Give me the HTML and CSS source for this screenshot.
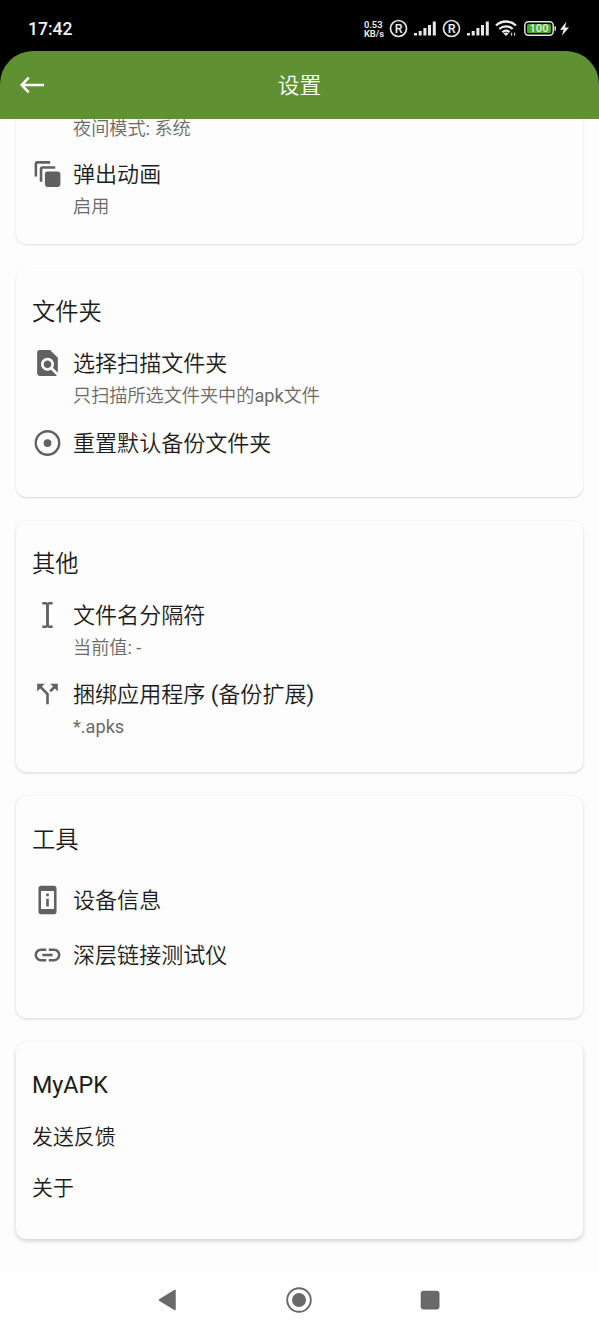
FILE: index.html
```html
<!DOCTYPE html>
<html lang="zh-CN">
<head>
<meta charset="utf-8">
<title>设置</title>
<link rel="stylesheet" href="styles.css">
</head>
<body>
<div class="screen">
  <div class="status">
    <span class="clock">17:42</span>
    <div class="indicators">
      <span class="speed"><span>0.53</span><span>KB/s</span></span>
      <svg class="tray" viewBox="0 0 186 24" width="186" height="24">
        <g fill="none" stroke="#e4e4e4" stroke-width="1.700"><circle cx="11.500" cy="11.500" r="8"/><circle cx="64.500" cy="11.500" r="8"/></g>
        <g class="reg" text-anchor="middle"><text x="11.700" y="16">R</text><text x="64.700" y="16">R</text></g>
        <g fill="#e8e8e8">
          <path d="M27 16h3v2.600h-3zM31.700 14h3v4.600h-3zM36.400 11h3v7.600h-3zM41 8h3v10.600h-3zM45.800 4.500h3v14.100h-3z"/>
          <path d="M80 16h3v2.600h-3zM84.700 14h3v4.600h-3zM89.400 11h3v7.600h-3zM94 8h3v10.600h-3zM98.800 4.500h3v14.100h-3z"/>
        </g>
        <g fill="none" stroke="#eee" stroke-width="2.300"><path d="M109 8.500a14.500 14.500 0 0 1 20 0"/><path d="M112.300 12a9.800 9.800 0 0 1 13.400 0"/><path d="M115.500 15.200a5 5 0 0 1 7 0"/></g>
        <path fill="#eee" d="M116.500 16.500q2.500-1.800 5 0L119 19z"/>
        <path d="M124.600 18.800v-3M127.600 15.800v3" stroke="#ccc" stroke-width="1.200"/>
        <rect x="137.800" y="4.800" width="28.400" height="13.400" rx="3.600" fill="#000" stroke="#e4e4e4" stroke-width="1.500"/>
        <rect x="140" y="7" width="24" height="9" rx="1.500" fill="#4fa52b"/>
        <text class="level" x="152" y="15.400" text-anchor="middle">100</text>
        <path d="M168.200 9.200v4.600" stroke="#ccc" stroke-width="1.600"/>
        <path fill="#eee" d="M179.500 4.500L173 12.700h3.700l-1.900 6 7.200-8.200h-4z"/>
      </svg>
    </div>
  </div>
  <header class="bar">
    <svg class="back" viewBox="0 0 24 24" width="24" height="24" fill="none" stroke="#fff" stroke-width="2.600"><path d="M1.500 12H24M8.700 4.700L1.700 12l7 7.300"/></svg>
    <h1 class="bar-title">设置</h1>
    <span></span>
  </header>
  <main class="list">
    <section class="card appearance">
      <div class="row"><span class="sub">夜间模式<span class="latin">: </span>系统</span></div>
      <div class="row">
        <svg class="icon" viewBox="0 0 24 24"><path d="M14 2H4c-1.100 0-2 .9-2 2v10h2V4h10V2zm4 4H8c-1.100 0-2 .9-2 2v10h2V8h10V6zm2 4h-8c-1.100 0-2 .9-2 2v8c0 1.100.9 2 2 2h8c1.100 0 2-.9 2-2v-8c0-1.100-.9-2-2-2z"/></svg>
        <span class="label">弹出动画</span><span class="sub">启用</span>
      </div>
    </section>
    <section class="card folders">
      <h2 class="heading">文件夹</h2>
      <div class="row">
        <svg class="icon" viewBox="0 0 24 24"><path d="M20 19.590V8l-6-6H6c-1.100 0-1.990.9-1.990 2L4 20c0 1.100.890 2 1.990 2H18c.450 0 .850-.150 1.190-.4l-4.430-4.430c-.8.520-1.740.830-2.760.830-2.760 0-5-2.240-5-5s2.240-5 5-5 5 2.240 5 5c0 1.020-.310 1.960-.830 2.750L20 19.590zM9 13c0 1.660 1.340 3 3 3s3-1.340 3-3-1.340-3-3-3-3 1.340-3 3z"/></svg>
        <span class="label">选择扫描文件夹</span><span class="sub">只扫描所选文件夹中的<span class="latin">apk</span>文件</span>
      </div>
      <div class="row">
        <svg class="icon" viewBox="0 0 24 24"><circle cx="12" cy="12" r="9.100" fill="none" stroke="#616161" stroke-width="1.800"/><circle cx="12" cy="12" r="3"/></svg>
        <span class="label">重置默认备份文件夹</span>
      </div>
    </section>
    <section class="card other">
      <h2 class="heading">其他</h2>
      <div class="row">
        <svg class="icon" viewBox="0 0 24 24"><path d="M8 2h3.200l.8.700.8-.7H16v1.900h-2.900V20.100H16V22h-3.200l-.8-.7-.8.700H8v-1.900h2.900V3.900H8z"/></svg>
        <span class="label">文件名分隔符</span><span class="sub">当前值<span class="latin">: -</span></span>
      </div>
      <div class="row">
        <svg class="icon" viewBox="0 0 24 24"><path d="M14 4l2.290 2.290-2.880 2.880 1.420 1.420 2.880-2.880L20 10V4zm-4 0H4v6l2.290-2.290 4.710 4.700V20h2v-8.410l-5.290-5.300z"/></svg>
        <span class="label">捆绑应用程序<span class="latin"> (</span>备份扩展<span class="latin">)</span></span><span class="sub latin">*.apks</span>
      </div>
    </section>
    <section class="card tools">
      <h2 class="heading">工具</h2>
      <div class="row">
        <svg class="icon" viewBox="0 0 24 24"><path d="M13 7h-2v2h2V7zm0 4h-2v6h2v-6zm4-9.990L7 1c-1.100 0-2 .9-2 2v18c0 1.100.9 2 2 2h10c1.100 0 2-.9 2-2V3c0-1.100-.9-1.990-2-1.990zM17 19H7V5h10v14z"/></svg>
        <span class="label">设备信息</span>
      </div>
      <div class="row">
        <svg class="icon" viewBox="0 0 24 24"><path d="M3.900 12c0-1.710 1.390-3.100 3.100-3.100h4V7H7c-2.760 0-5 2.240-5 5s2.240 5 5 5h4v-1.900H7c-1.710 0-3.100-1.390-3.100-3.100zM8 13h8v-2H8v2zm9-6h-4v1.900h4c1.710 0 3.100 1.390 3.100 3.100s-1.390 3.100-3.100 3.100h-4V17h4c2.760 0 5-2.240 5-5s-2.240-5-5-5z"/></svg>
        <span class="label">深层链接测试仪</span>
      </div>
    </section>
    <section class="card about">
      <h2 class="heading latin">MyAPK</h2>
      <div class="entry">发送反馈</div>
      <div class="entry">关于</div>
    </section>
  </main>
  <nav class="nav">
    <svg viewBox="0 0 28 28" width="28" height="28"><path d="M5.500 14L21 4.500v19z" stroke="#696969" stroke-width="1.500" stroke-linejoin="round"/></svg>
    <svg viewBox="0 0 28 28" width="28" height="28"><circle cx="14" cy="14" r="11.800" fill="none" stroke="#696969" stroke-width="1.900"/><circle cx="14" cy="14" r="7"/></svg>
    <svg viewBox="0 0 28 28" width="28" height="28"><rect x="4.700" y="4.700" width="18.800" height="18.800" rx="3"/></svg>
  </nav>
</div>
</body>
</html>
```
FILE: styles.css
```css
body {
  margin: 0;
  background: #fdfdfd;
  font-family: Roboto, "Noto Sans CJK SC", sans-serif;
  font-weight: 350;
  color: #1c1c1c;
}
.screen {
  display: flex;
  flex-direction: column;
  height: 1333px;
  overflow: hidden;
  background: linear-gradient(#000 90px, #fdfdfd 90px);
}
.status {
  display: flex;
  justify-content: space-between;
  align-items: center;
  box-sizing: border-box;
  height: 51px;
  flex: none;
  padding: 7px 26px 0 28px;
  color: #f2f2f2;
}
.clock {
  font-size: 17.500px;
  font-weight: 500;
  line-height: 24px;
}
.indicators {
  display: flex;
  align-items: center;
  gap: 3px;
}
.speed {
  display: flex;
  flex-direction: column;
  font-size: 9.300px;
  font-weight: 600;
  line-height: 9.500px;
}
.tray { display: block; }
.reg {
  fill: #eee;
  font-size: 12.500px;
  font-weight: 500;
}
.level {
  fill: #d9f2cf;
  font-size: 11px;
  font-weight: 600;
}
.bar {
  display: grid;
  grid-template-columns: 24px 1fr 24px;
  align-items: center;
  box-sizing: border-box;
  height: 68px;
  flex: none;
  padding: 0 20px;
  border-radius: 33px 33px 0 0;
  background: #5f9132;
}
.back { margin-left: -.5px; }
.bar-title {
  margin: 0;
  padding-top: 2px;
  color: #fff;
  font-size: 21.700px;
  font-weight: 350;
  line-height: 32px;
  text-align: center;
}
.list {
  display: flex;
  flex-direction: column;
  justify-content: flex-end;
  gap: 24px;
  box-sizing: border-box;
  height: 1153px;
  flex: none;
  padding: 0 16px 33px;
  overflow: hidden;
  background: #fdfdfd;
}
.card {
  flex: none;
  box-sizing: border-box;
  padding: 27px 16px 0;
  border-radius: 10px;
  background: #fdfdfd;
  box-shadow: 0 1px 3px rgba(0, 0, 0, .17);
}
.heading {
  margin: 0;
  font-size: 23.300px;
  font-weight: 350;
  line-height: 32px;
}
.latin { font-weight: 400; }
.row {
  display: grid;
  grid-template-columns: 31px 1fr;
  column-gap: 10px;
  align-items: center;
  margin-top: 15px;
}
.heading + .row { margin-top: 20px; }
.icon {
  width: 31px;
  height: 32px;
  margin: -2px 0 0 -.5px;
  fill: #616161;
}
.label {
  font-size: 22.050px;
  line-height: 32px;
}
.sub {
  grid-column: 2;
  color: #6a6a6a;
  font-size: 18.150px;
  line-height: 32px;
}
.entry {
  margin-top: 20px;
  font-size: 20.900px;
  line-height: 32px;
}
.entry + .entry { margin-top: 19px; }
.appearance {
  display: flex;
  flex-direction: column;
  justify-content: flex-end;
  height: 180px;
  padding-bottom: 21px;
  box-shadow: 0 1px 2px rgba(0, 0, 0, .12);
}
.appearance .row { margin-top: 14px; }
.folders { height: 229px; padding-top: 28px; box-shadow: 0 1px 2px rgba(0, 0, 0, .15); }
.folders .row + .row { margin-top: 16px; }
.other { height: 251px; }
.tools { height: 222px; padding-top: 28px; }
.tools .row { margin-top: 23px; }
.tools .heading + .row { margin-top: 29px; }
.about { height: 197px; box-shadow: 0 2px 4px rgba(0, 0, 0, .18); }
.nav {
  display: flex;
  justify-content: center;
  align-items: center;
  gap: 103px;
  height: 61px;
  padding: 0 2px 5px 0;
  box-sizing: border-box;
  background: #fff;
  fill: #696969;
}
```
